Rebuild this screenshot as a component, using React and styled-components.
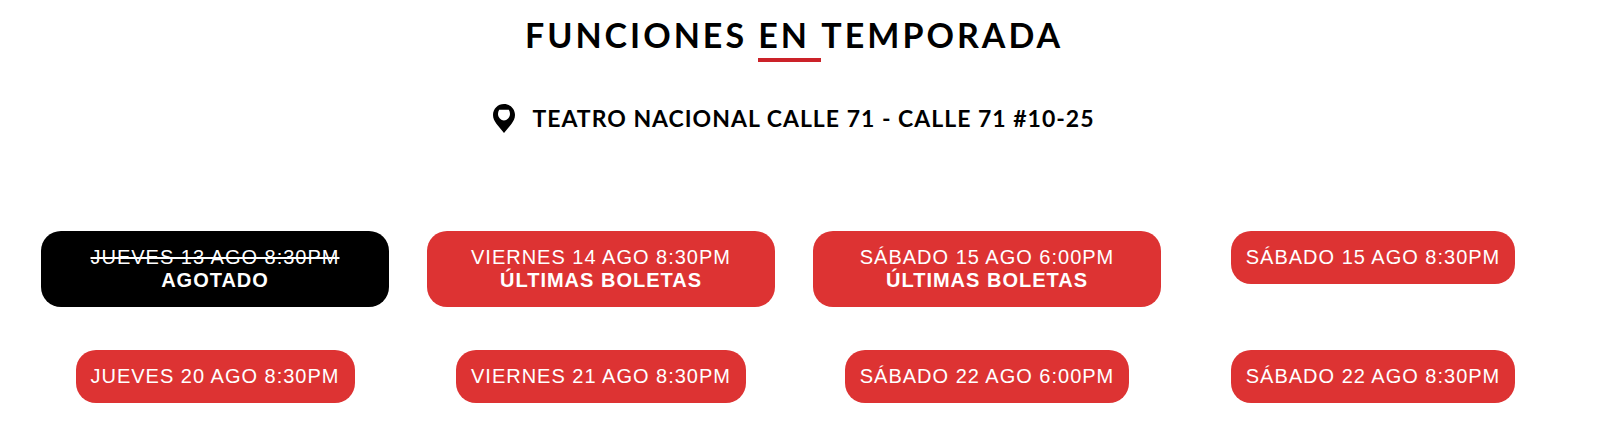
import React from 'react';
import styled, { createGlobalStyle, css, ThemeProvider } from 'styled-components';

const theme = {
  black: '#000000',
  white: '#ffffff',
  red: '#dd3333',
  redLine: '#cb2229',
  font: {
    heading: "Lato, 'Open Sans', sans-serif",
    body: "'Liberation Sans', Arial, sans-serif",
  },
};

const GlobalStyle = createGlobalStyle`
  * {
    box-sizing: border-box;
  }
  body {
    margin: 0;
    background-color: #ffffff;
  }
`;

const Wrapper = styled.section`
  padding: 10px 61px 38px 41px;
  color: ${({ theme }) => theme.black};
`;
const Title = styled.h2`
  margin: 0;
  text-align: center;
  font-family: ${({ theme }) => theme.font.heading};
  font-size: 34px;
  font-weight: 700;
  line-height: 50px;
  letter-spacing: 3px;
  text-transform: uppercase;
`;
const Underlined = styled.span`
  display: inline-block;
  white-space: pre;
  border-bottom: 4px solid ${({ theme }) => theme.redLine};
  line-height: 46px;
`;
const Place = styled.h3`
  display: flex;
  align-items: center;
  justify-content: center;
  gap: 17px;
  margin: 39px 0 95px;
  font-family: ${({ theme }) => theme.font.heading};
  font-size: 23px;
  font-weight: 700;
  line-height: 35px;
  letter-spacing: 1px;
  text-transform: uppercase;
`;
const Pin = styled.svg`
  width: 22px;
  height: 29px;
  flex: none;
`;
const Dates = styled.ul`
  display: grid;
  grid-template-columns: repeat(4, 1fr);
  gap: 43px 38px;
  margin: 0;
  padding: 0;
  list-style: none;
`;
const DateItem = styled.li`
  display: flex;
  align-items: flex-start;
  justify-content: center;
`;
const DateButton = styled.button`
  padding: 15px;
  border: 0;
  border-radius: 20px;
  color: ${({ theme }) => theme.white};
  background-color: ${({ theme }) => theme.red};
  font-family: ${({ theme }) => theme.font.body};
  font-size: 20px;
  line-height: 23px;
  letter-spacing: 1px;
  text-align: center;
  text-transform: uppercase;
  cursor: pointer;
  ${({ $wide }) =>
    $wide &&
    css`
      width: 100%;
    `}
  &:disabled {
    background-color: ${({ theme }) => theme.black};
    cursor: default;
  }
`;
const SoldOutDate = styled.s`
  text-decoration-thickness: 2px;
`;
const Note = styled.strong`
  display: block;
`;

const functions = [
  { date: 'Jueves 13 Ago 8:30PM', note: 'Agotado', soldOut: true },
  { date: 'Viernes 14 Ago 8:30PM', note: 'Últimas boletas' },
  { date: 'Sábado 15 Ago 6:00PM', note: 'Últimas boletas' },
  { date: 'Sábado 15 Ago 8:30PM' },
  { date: 'Jueves 20 Ago 8:30PM' },
  { date: 'Viernes 21 Ago 8:30PM' },
  { date: 'Sábado 22 Ago 6:00PM' },
  { date: 'Sábado 22 Ago 8:30PM' },
];

const App = () => (
  <ThemeProvider theme={theme}>
    <GlobalStyle />
    <Wrapper>
      <Title>
        Funciones <Underlined>{'en '}</Underlined>Temporada
      </Title>
      <Place>
        <Pin viewBox="0 0 22 29" aria-hidden="true">
          <path
            fill="currentColor"
            fillRule="evenodd"
            d="M11 0C4.900 0 0 4.900 0 11c0 3.500 1.500 6.100 3.600 9L11 29l7.400-9c2.100-2.900 3.600-5.500 3.600-9C22 4.900 17.100 0 11 0zM6.200 5.800h9.600c.8 1.100 1.200 2.500 1.200 4.200 0 3.500-3 6.500-6 6.500s-6-3-6-6.500c0-1.700.4-3.100 1.200-4.200z"
          />
        </Pin>
        Teatro Nacional Calle 71 - Calle 71 #10-25
      </Place>
      <Dates>
        {functions.map(({ date, note, soldOut }) => (
          <DateItem key={date}>
            <DateButton type="button" $wide={Boolean(note)} disabled={soldOut}>
              {soldOut ? <SoldOutDate>{date}</SoldOutDate> : date}
              {note && <Note>{note}</Note>}
            </DateButton>
          </DateItem>
        ))}
      </Dates>
    </Wrapper>
  </ThemeProvider>
);

export default App;
